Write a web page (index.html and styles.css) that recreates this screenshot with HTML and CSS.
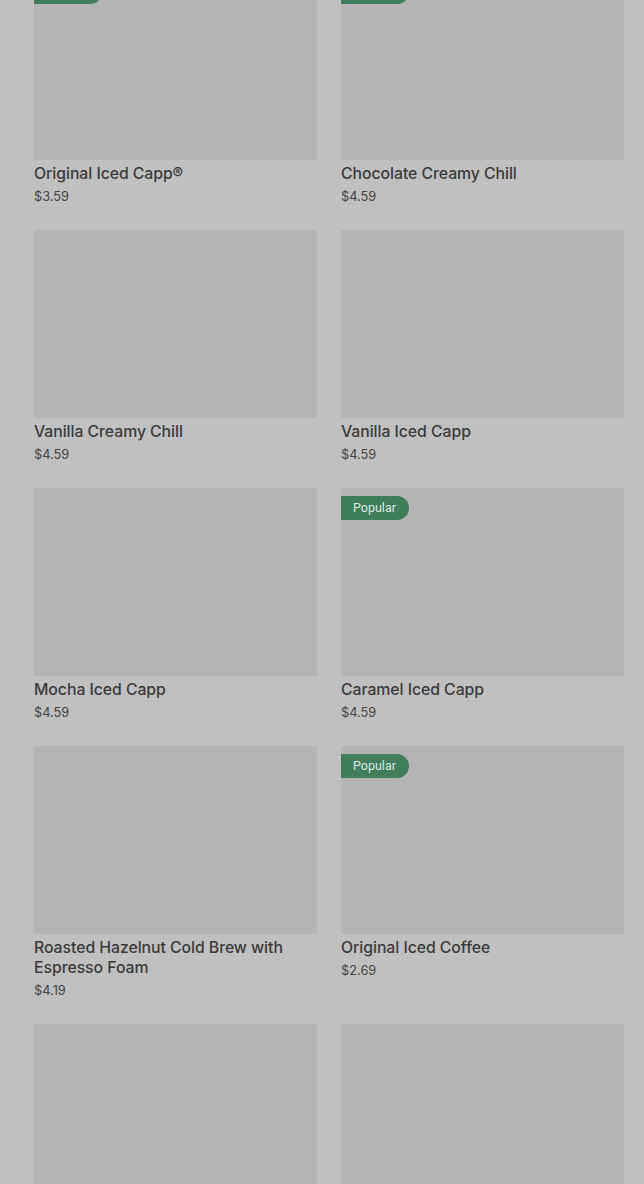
FILE: index.html
```html
<!DOCTYPE html>
<html>
<head>
<meta charset="utf-8">
<link rel="stylesheet" href="styles.css">
</head>
<body>
<div class="grid">
  <div class="card"><div class="img"><span class="badge">Popular</span></div><div class="name">Original Iced Capp®</div><div class="price">$3.59</div></div>
  <div class="card"><div class="img"><span class="badge">Popular</span></div><div class="name">Chocolate Creamy Chill</div><div class="price">$4.59</div></div>
  <div class="card"><div class="img"></div><div class="name">Vanilla Creamy Chill</div><div class="price">$4.59</div></div>
  <div class="card"><div class="img"></div><div class="name">Vanilla Iced Capp</div><div class="price">$4.59</div></div>
  <div class="card"><div class="img"></div><div class="name">Mocha Iced Capp</div><div class="price">$4.59</div></div>
  <div class="card"><div class="img"><span class="badge">Popular</span></div><div class="name">Caramel Iced Capp</div><div class="price">$4.59</div></div>
  <div class="card"><div class="img"></div><div class="name">Roasted Hazelnut Cold Brew with Espresso Foam</div><div class="price">$4.19</div></div>
  <div class="card"><div class="img"><span class="badge">Popular</span></div><div class="name">Original Iced Coffee</div><div class="price">$2.69</div></div>
  <div class="card"><div class="img"></div><div class="name">Iced Latte</div><div class="price">$4.59</div></div>
  <div class="card"><div class="img"></div><div class="name">Iced Mocha</div><div class="price">$4.59</div></div>
</div>
</body>
</html>
```
FILE: styles.css
```css
html, body {
  margin: 0;
  padding: 0;
  background: #c0c0c0;
  overflow: hidden;
  height: 1184px;
}
body {
  font-family: Inter, Roboto, "Liberation Sans", sans-serif;
  color: #3b3b3b;
}
.grid {
  display: grid;
  grid-template-columns: 283px 283px;
  column-gap: 24px;
  row-gap: 24px;
  padding: 0 20px 0 34px;
  margin-top: -28px;
}
.card {
  display: flex;
  flex-direction: column;
}
.img {
  height: 188px;
  background: #b4b4b4;
  position: relative;
}
.badge {
  position: absolute;
  top: 8px;
  left: 0;
  height: 24px;
  line-height: 24px;
  padding: 0 13px 0 12px;
  background: #3f7d5b;
  color: #dfe6e2;
  font-family: Roboto, sans-serif;
  font-size: 12.5px;
  border-radius: 0 12px 12px 0;
}
.name {
  margin-top: 4px;
  font-size: 15.8px;
  font-weight: 500;
  line-height: 20px;
  letter-spacing: -0.05px;
  color: #3a3a3a;
}
.price {
  margin-top: 3px;
  font-size: 12.8px;
  line-height: 19px;
  color: #444;
}
```
